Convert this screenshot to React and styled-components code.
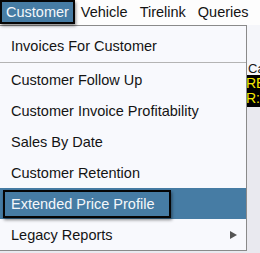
import styled, { createGlobalStyle } from "styled-components";

const GlobalStyle = createGlobalStyle`
  html, body {
    margin: 0;
    padding: 0;
    background: #e9e9ef;
    font-family: "Liberation Sans", Arial, sans-serif;
  }
`;

const topItems = ["Customer", "Vehicle", "Tirelink", "Queries"];

const reportItems = [
  { label: "Customer Follow Up" },
  { label: "Customer Invoice Profitability" },
  { label: "Sales By Date" },
  { label: "Customer Retention" },
  { label: "Extended Price Profile", active: true },
  { label: "Legacy Reports", submenu: true },
];

const App = () => {
  return (
    <Page>
      <GlobalStyle />
      <MenuBar>
        {topItems.map((item, i) => (
          <TopItem key={item} $active={i === 0}>
            {item}
          </TopItem>
        ))}
      </MenuBar>

      <Workspace>
        <Hidden />
        <SidePanel>
          <Spacer />
          <FieldLabel>Ca</FieldLabel>
          <Console>
            <ConsoleLine>RE</ConsoleLine>
            <ConsoleLine>R:</ConsoleLine>
          </Console>
        </SidePanel>
      </Workspace>

      <Dropdown>
        <MenuItem>
          <ItemLabel>Invoices For Customer</ItemLabel>
        </MenuItem>
        <Separator />
        {reportItems.map((item) => (
          <MenuItem key={item.label} $active={item.active}>
            <ItemLabel $focused={item.active}>{item.label}</ItemLabel>
            {item.submenu && (
              <Arrow viewBox="0 0 7 8">
                <polygon points="0,0 7,4 0,8" fill="#555" />
              </Arrow>
            )}
          </MenuItem>
        ))}
      </Dropdown>
    </Page>
  );
};

const Page = styled.div`
  position: relative;
  width: 260px;
  height: 253px;
  overflow: hidden;
  background: #e9e9ef;
`;

const MenuBar = styled.div`
  display: flex;
  height: 25px;
  background: #fdfdfd;
`;

const TopItem = styled.div`
  display: flex;
  align-items: center;
  padding: 0 6px;
  height: 24px;
  font-size: 14.5px;
  color: ${({ $active }) => ($active ? "#f4f7fa" : "#141414")};
  background: ${({ $active }) => ($active ? "#467ca4" : "transparent")};
  outline: ${({ $active }) => ($active ? "2px solid #050505" : "none")};
  outline-offset: -2px;
  box-shadow: ${({ $active }) =>
    $active ? "1px 2px 3px rgba(0, 0, 0, 0.45)" : "none"};
  position: relative;
  z-index: 3;
`;

const Workspace = styled.div`
  display: grid;
  grid-template-columns: 246px 1fr;
`;

const Hidden = styled.div``;

const SidePanel = styled.div`
  display: flex;
  flex-direction: column;
  overflow: hidden;
`;

const Spacer = styled.div`
  height: 37px;
  background: #f5f6fa;
`;

const FieldLabel = styled.div`
  height: 13px;
  padding-left: 2px;
  font-size: 13px;
  line-height: 13px;
  color: #141414;
  background: #f5f6fa;
  white-space: nowrap;
`;

const Console = styled.div`
  height: 32px;
  background: #000;
  padding-top: 1px;
  box-sizing: border-box;
`;

const ConsoleLine = styled.div`
  font-size: 14px;
  line-height: 15px;
  color: #f2e600;
  white-space: nowrap;
`;

const Dropdown = styled.div`
  position: absolute;
  top: 25px;
  left: -1px;
  width: 246px;
  padding: 4px 0 0;
  background: #f8f9fd;
  border: 1px solid #8a8a8a;
  z-index: 2;
`;

const MenuItem = styled.div`
  display: flex;
  align-items: center;
  justify-content: space-between;
  height: 31px;
  padding: 0 9px 0 3px;
  background: ${({ $active }) => ($active ? "#467ca4" : "transparent")};
  color: ${({ $active }) => ($active ? "#f4f7fa" : "#141414")};
`;

const ItemLabel = styled.span`
  display: inline-flex;
  align-items: center;
  height: 28px;
  box-sizing: border-box;
  padding: 0 15px 0 6px;
  font-size: 14.5px;
  border: 2px solid ${({ $focused }) => ($focused ? "#050505" : "transparent")};
  box-shadow: ${({ $focused }) =>
    $focused ? "1px 2px 3px rgba(0, 0, 0, 0.45)" : "none"};
  white-space: nowrap;
`;

const Separator = styled.div`
  height: 1px;
  margin: 1px 0;
  background: #b4b4b4;
`;

const Arrow = styled.svg`
  width: 7px;
  height: 8px;
`;

export default App;
